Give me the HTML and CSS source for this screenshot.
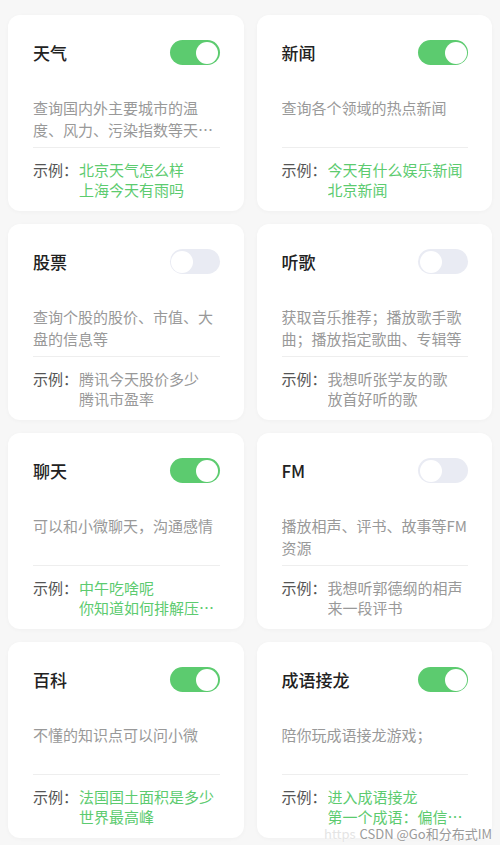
FILE: index.html
```html
<!DOCTYPE html>
<html lang="zh-CN">
<head>
    <meta charset="UTF-8">
    <meta name="viewport" content="width=device-width, initial-scale=1.0">
    <title>技能</title>
    <link rel="stylesheet" href="styles.css">
</head>
<body>
    <div class="grid">
        <div class="card">
            <div class="card-head">
                <span class="title">天气</span>
                <span class="switch on"></span>
            </div>
            <p class="desc">查询国内外主要城市的温度、风力、污染指数等天气信息</p>
            <div class="examples">
                <span class="label">示例：</span>
                <div class="list">
                    <div class="item">北京天气怎么样</div>
                    <div class="item">上海今天有雨吗</div>
                </div>
            </div>
        </div>

        <div class="card">
            <div class="card-head">
                <span class="title">新闻</span>
                <span class="switch on"></span>
            </div>
            <p class="desc">查询各个领域的热点新闻</p>
            <div class="examples">
                <span class="label">示例：</span>
                <div class="list">
                    <div class="item">今天有什么娱乐新闻</div>
                    <div class="item">北京新闻</div>
                </div>
            </div>
        </div>

        <div class="card">
            <div class="card-head">
                <span class="title">股票</span>
                <span class="switch"></span>
            </div>
            <p class="desc">查询个股的股价、市值、大盘的信息等</p>
            <div class="examples off">
                <span class="label">示例：</span>
                <div class="list">
                    <div class="item">腾讯今天股价多少</div>
                    <div class="item">腾讯市盈率</div>
                </div>
            </div>
        </div>

        <div class="card">
            <div class="card-head">
                <span class="title">听歌</span>
                <span class="switch"></span>
            </div>
            <p class="desc">获取音乐推荐；播放歌手歌曲；播放指定歌曲、专辑等</p>
            <div class="examples off">
                <span class="label">示例：</span>
                <div class="list">
                    <div class="item">我想听张学友的歌</div>
                    <div class="item">放首好听的歌</div>
                </div>
            </div>
        </div>

        <div class="card">
            <div class="card-head">
                <span class="title">聊天</span>
                <span class="switch on"></span>
            </div>
            <p class="desc">可以和小微聊天，沟通感情</p>
            <div class="examples">
                <span class="label">示例：</span>
                <div class="list">
                    <div class="item">中午吃啥呢</div>
                    <div class="item">你知道如何排解压力吗</div>
                </div>
            </div>
        </div>

        <div class="card">
            <div class="card-head">
                <span class="title">FM</span>
                <span class="switch"></span>
            </div>
            <p class="desc">播放相声、评书、故事等FM资源</p>
            <div class="examples off">
                <span class="label">示例：</span>
                <div class="list">
                    <div class="item">我想听郭德纲的相声</div>
                    <div class="item">来一段评书</div>
                </div>
            </div>
        </div>

        <div class="card">
            <div class="card-head">
                <span class="title">百科</span>
                <span class="switch on"></span>
            </div>
            <p class="desc">不懂的知识点可以问小微</p>
            <div class="examples">
                <span class="label">示例：</span>
                <div class="list">
                    <div class="item">法国国土面积是多少</div>
                    <div class="item">世界最高峰</div>
                </div>
            </div>
        </div>

        <div class="card">
            <div class="card-head">
                <span class="title">成语接龙</span>
                <span class="switch on"></span>
            </div>
            <p class="desc">陪你玩成语接龙游戏；</p>
            <div class="examples">
                <span class="label">示例：</span>
                <div class="list">
                    <div class="item">进入成语接龙</div>
                    <div class="item">第一个成语：偏信则暗</div>
                </div>
            </div>
        </div>
    </div>

    <div class="watermark"><span class="url">https</span>CSDN @Go和分布式IM</div>
</body>
</html>
```

FILE: styles.css
```css
body {
    margin: 0;
    padding: 15px 8px 7px;
    background: #f7f7f7;
    font-family: "Noto Sans CJK SC", "Noto Sans", sans-serif;
    color: #333;
}
.grid {
    display: grid;
    grid-template-columns: minmax(0, 1fr) minmax(0, 1fr);
    column-gap: 13px;
    row-gap: 13px;
}
.card {
    background: #fff;
    border-radius: 12px;
    padding: 25px 24px 10px 25px;
    height: 196px;
    box-sizing: border-box;
    box-shadow: 0 1px 4px rgba(0, 0, 0, 0.03);
}
.card-head {
    display: flex;
    justify-content: space-between;
    align-items: center;
    height: 25px;
}
.title {
    font-size: 17px;
    font-weight: 500;
    color: #222;
}
.switch {
    position: relative;
    width: 50px;
    height: 25px;
    border-radius: 13px;
    background: #e9ebf3;
    box-sizing: border-box;
}
.switch::after {
    content: "";
    position: absolute;
    top: 1.5px;
    left: 1.5px;
    width: 22px;
    height: 22px;
    border-radius: 50%;
    background: #fff;
}
.switch.on {
    background: #5ccb6f;
}
.switch.on::after {
    left: 26.5px;
}
.desc {
    margin: 32px 0 0;
    height: 44px;
    font-size: 15px;
    line-height: 22px;
    color: #999;
    display: -webkit-box;
    -webkit-line-clamp: 2;
    -webkit-box-orient: vertical;
    overflow: hidden;
}
.examples {
    display: flex;
    margin-top: 6px;
    border-top: 1px solid #eee;
    padding-top: 12px;
    font-size: 15px;
    line-height: 20px;
}
.label {
    flex: none;
    width: 46px;
    color: #555;
}
.list {
    min-width: 0;
    flex: 1;
}
.item {
    white-space: nowrap;
    overflow: hidden;
    text-overflow: ellipsis;
    color: #5ccb6f;
}
.examples.off .item {
    color: #999;
}
.watermark {
    position: absolute;
    top: 824px;
    right: 8px;
    font-size: 13px;
    line-height: 20px;
    color: #9a9a9a;
    text-shadow: 0 0 2px #fff, 0 0 2px #fff;
}
.url {
    color: #e4e4e4;
    margin-right: 4px;
}
```
